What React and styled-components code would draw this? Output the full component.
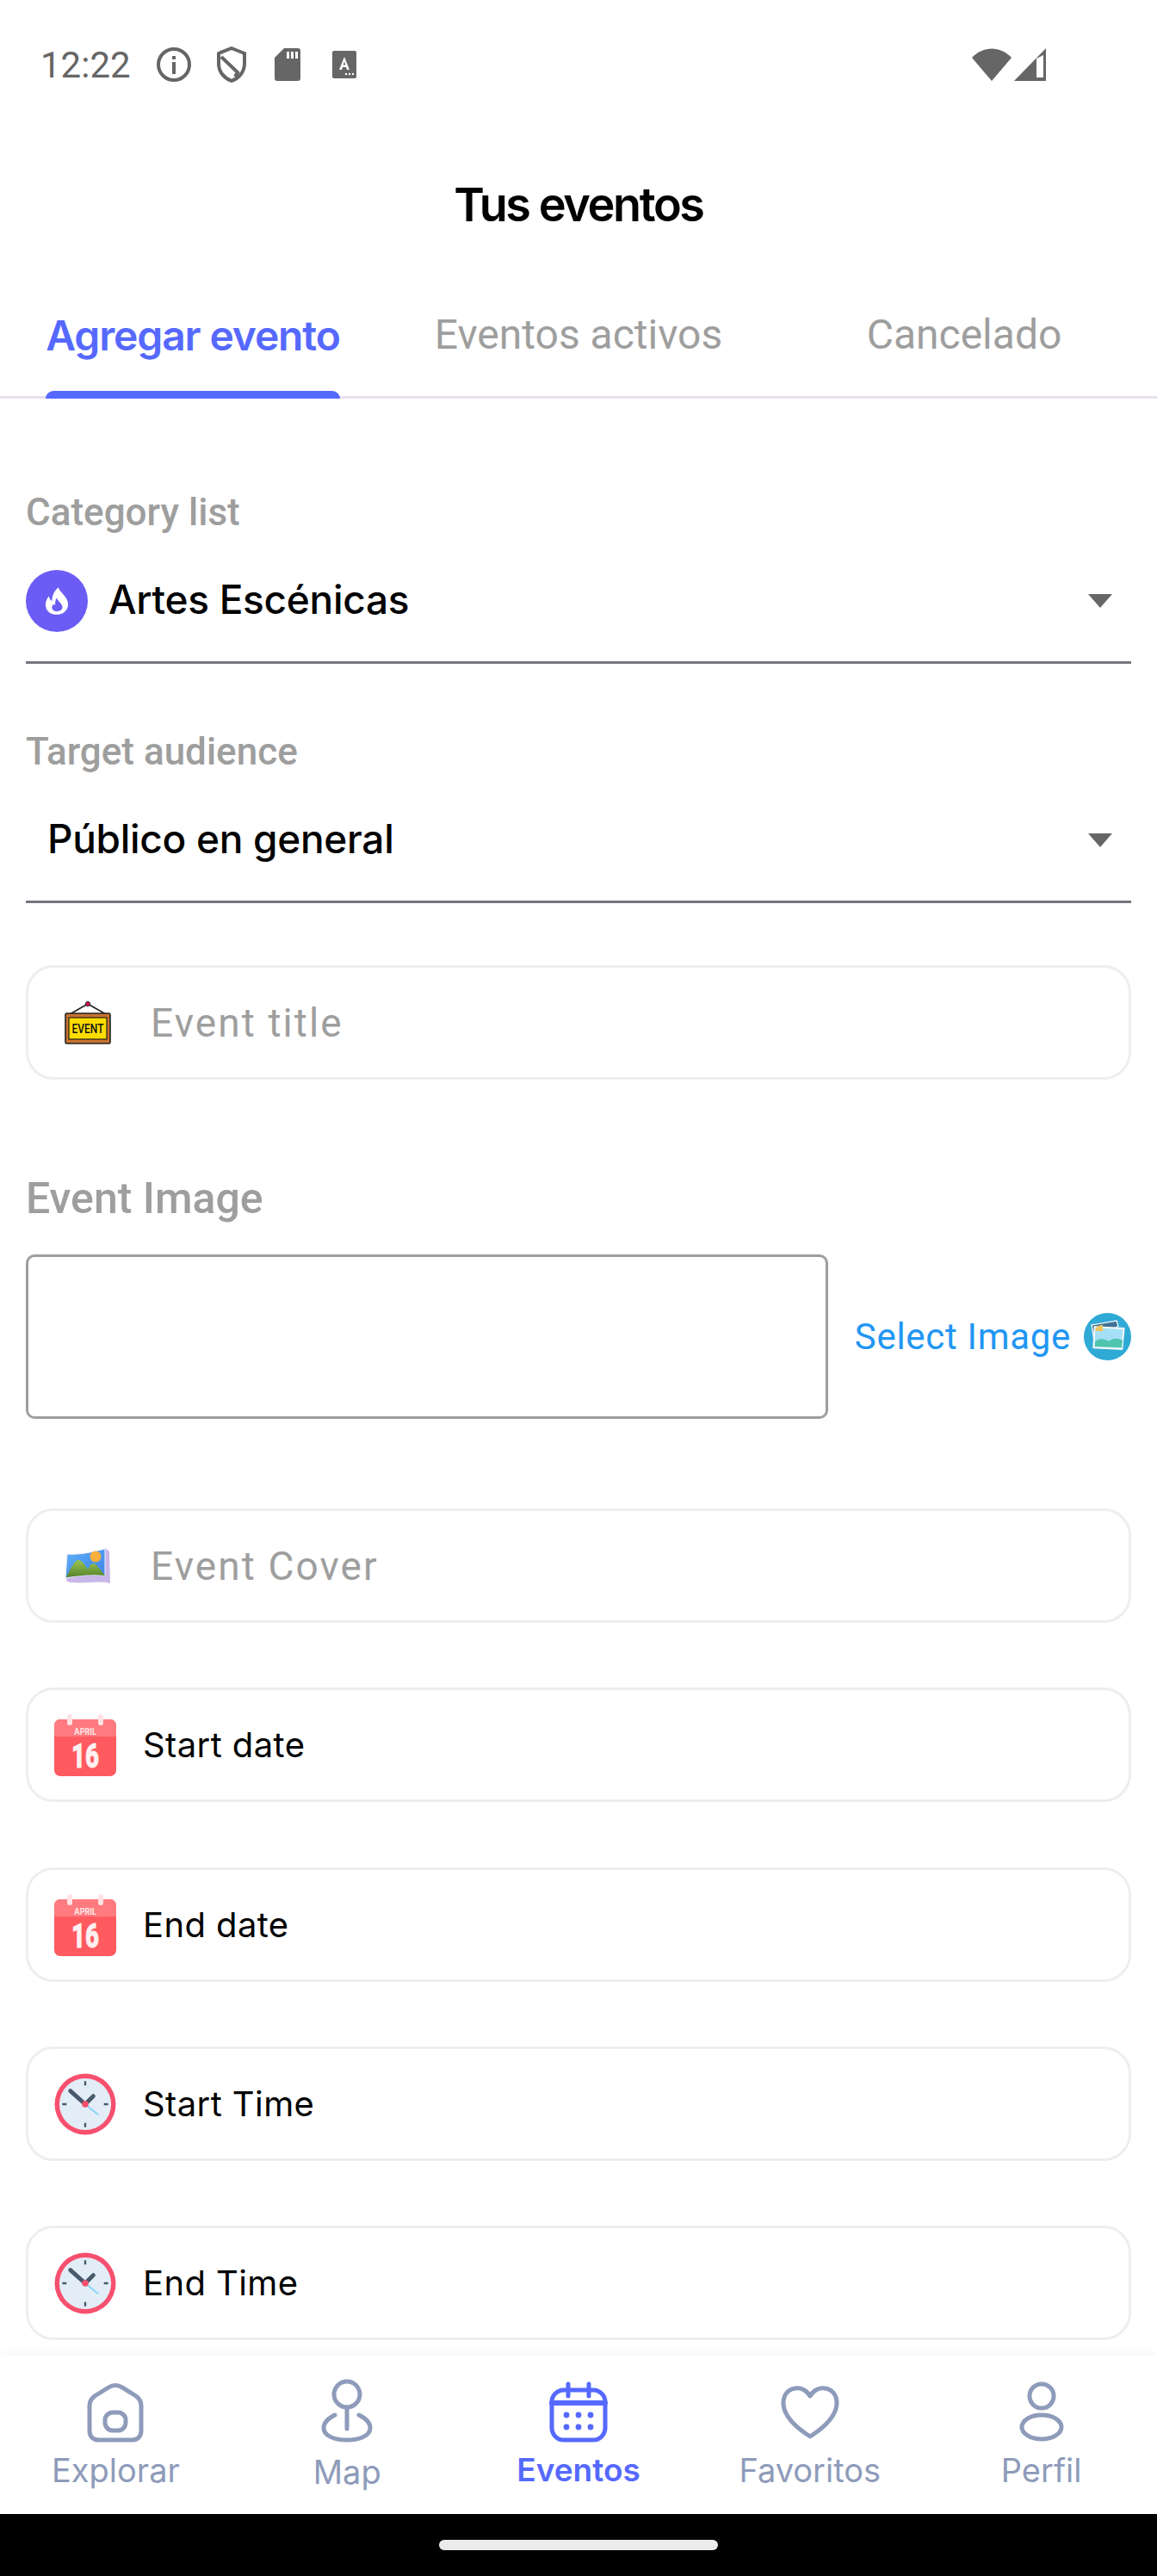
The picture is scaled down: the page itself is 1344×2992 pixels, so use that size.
import React from 'react';
import styled, { createGlobalStyle } from 'styled-components';

const GlobalStyle = createGlobalStyle`
  html, body { margin: 0; padding: 0; background: #fff; }
  * { box-sizing: border-box; }
`;

const Screen = styled.div`
  width: 1344px;
  height: 2992px;
  display: flex;
  flex-direction: column;
  overflow: hidden;
  background: #fff;
  font-family: Inter, "Liberation Sans", sans-serif;
`;

const StatusBar = styled.div`
  height: 150px;
  display: flex;
  align-items: center;
  justify-content: space-between;
  padding: 0 129px 0 47px;
  color: #666;
`;

const StatusGroup = styled.div`
  display: flex;
  align-items: center;
`;

const Clock = styled.span`
  font: 400 42px Roboto, sans-serif;
  margin-right: 30px;
`;

const Title = styled.h1`
  margin: 0;
  height: 174px;
  display: flex;
  align-items: center;
  justify-content: center;
  font: 600 54px Inter, sans-serif;
  letter-spacing: -2.4px;
  color: #000;
`;

const TabBar = styled.div`
  height: 139px;
  display: grid;
  grid-template-columns: repeat(3, 1fr);
  border-bottom: 3px solid #e7e0ec;
`;

const Tab = styled.div`
  display: flex;
  justify-content: center;
  padding-top: 36px;
  font: ${p => (p.$active ? '600 48px Inter' : '400 48px Roboto')}, sans-serif;
  letter-spacing: ${p => (p.$active ? '-1.15px' : '0')};
  color: ${p => (p.$active ? '#5669ff' : '#9e9e9e')};
`;

const TabLabel = styled.span`
  position: relative;
  &::after {
    content: '';
    display: ${p => (p.$active ? 'block' : 'none')};
    position: absolute;
    left: 0;
    right: 0;
    bottom: -3px;
    height: 9px;
    background: #5669ff;
    border-radius: 9px 9px 0 0;
  }
`;

const Form = styled.div`
  flex: 1;
  min-height: 0;
  overflow: hidden;
  padding: 0 30px;
  display: flex;
  flex-direction: column;
`;

const SelectLabel = styled.div`
  margin-top: ${p => p.$top}px;
  height: 48px;
  font: 500 44px/48px Roboto, sans-serif;
  color: #9e9e9e;
`;

const SelectRow = styled.div`
  height: 152px;
  flex: none;
  padding-top: 43px;
  padding-bottom: 34px;
  display: flex;
  align-items: center;
  gap: 24px;
  border-bottom: 3px solid #79747e;
  font: 500 46px Inter, sans-serif;
  color: #000;
`;

const SelectValue = styled.span`
  flex: 1;
  padding-left: ${p => p.$inset || 0}px;
  padding-bottom: 4px;
  letter-spacing: -0.3px;
`;

const Caret = styled.span`
  width: 0;
  height: 0;
  margin-right: 22px;
  border-left: 14px solid transparent;
  border-right: 14px solid transparent;
  border-top: 16px solid #666;
`;

const CategoryBadge = styled.span`
  width: 72px;
  height: 72px;
  border-radius: 50%;
  background: #6a5cf5;
  display: flex;
  align-items: center;
  justify-content: center;
`;

const FieldBox = styled.div`
  margin-top: ${p => p.$top}px;
  height: 133px;
  flex: none;
  display: flex;
  align-items: center;
  border: 3px solid #eeeeee;
  border-radius: 32px;
  background: #fff;
`;

const InputIcon = styled.span`
  width: 142px;
  padding-left: 42px;
  display: flex;
`;

const Placeholder = styled.span`
  font: 400 46px Roboto, sans-serif;
  letter-spacing: 2.1px;
  color: #9e9e9e;
`;

const PickerIcon = styled.span`
  width: 133px;
  padding-left: 30px;
  display: flex;
`;

const PickerText = styled.span`
  font: 400 40px Inter, sans-serif;
  letter-spacing: 0.4px;
  color: #000;
`;

const ImageLabel = styled.div`
  margin-top: 109px;
  height: 58px;
  font: 500 50px/58px Roboto, sans-serif;
  color: #9e9e9e;
`;

const ImageRow = styled.div`
  margin-top: 36px;
  display: flex;
  align-items: center;
`;

const ImagePreview = styled.div`
  width: 932px;
  height: 191px;
  border: 3px solid #9e9e9e;
  border-radius: 10px;
`;

const SelectImage = styled.div`
  flex: 1;
  display: flex;
  align-items: center;
  justify-content: flex-end;
  gap: 15px;
  font: 400 42px Roboto, sans-serif;
  letter-spacing: 0.7px;
  color: #2196f3;
`;

const BottomNav = styled.nav`
  height: 184px;
  flex: none;
  display: grid;
  grid-template-columns: repeat(5, 1fr);
  background: #fff;
  box-shadow: 0 -6px 6px rgba(0, 0, 0, 0.025);
`;

const NavItem = styled.div`
  display: flex;
  flex-direction: column;
  align-items: center;
  padding-top: ${p => p.$top || 29}px;
  font: ${p => (p.$active ? '600 37px' : '400 38px')}/40px Inter, sans-serif;
  color: ${p => (p.$active ? '#5669ff' : '#8e9bba')};
`;

const NavIcon = styled.span`
  height: 72px;
  margin-bottom: ${p => p.$gap || 12}px;
  display: flex;
`;

const HomeBar = styled.div`
  height: 72px;
  flex: none;
  background: #000;
  display: flex;
  justify-content: center;
  padding-top: 30px;
`;

const HomePill = styled.div`
  width: 324px;
  height: 12px;
  border-radius: 6px;
  background: #ebebeb;
`;

const InfoIcon = () => (
  <svg width="40" height="42" viewBox="0 0 40 42" style={{ marginRight: 30 }}>
    <circle cx="20" cy="21" r="18" fill="none" stroke="#666" strokeWidth="4" />
    <rect x="18" y="18" width="4" height="14" fill="#666" />
    <rect x="18" y="11" width="4" height="4" fill="#666" />
  </svg>
);

const ShieldIcon = () => (
  <svg width="34" height="42" viewBox="0 0 34 42" style={{ marginRight: 33 }}>
    <path d="M17 2 L32 8 V20 C32 30 25 37 17 40 C9 37 2 30 2 20 V8 Z" fill="none" stroke="#666" strokeWidth="4" />
    <path d="M5 12 L24 30 L21 35" fill="none" stroke="#666" strokeWidth="4" />
  </svg>
);

const SdIcon = () => (
  <svg width="30" height="38" viewBox="0 0 30 38" style={{ marginRight: 37 }}>
    <path d="M11 0 H27 a3 3 0 0 1 3 3 V35 a3 3 0 0 1 -3 3 H3 a3 3 0 0 1 -3 -3 V11 Z" fill="#666" />
    <rect x="14" y="4" width="3" height="8" fill="#fff" />
    <rect x="19" y="4" width="3" height="8" fill="#fff" />
    <rect x="24" y="4" width="3" height="8" fill="#fff" />
  </svg>
);

const KeyboardIcon = () => (
  <svg width="28" height="32" viewBox="0 0 28 32">
    <rect width="28" height="32" rx="2" fill="#666" />
    <path d="M14 7 L20 22 H17 L16 19 H12 L11 22 H8 Z M14 12 L12.8 16.5 H15.2 Z" fill="#fff" fillRule="evenodd" />
    <circle cx="16" cy="27" r="1.2" fill="#fff" />
    <circle cx="20" cy="27" r="1.2" fill="#fff" />
    <circle cx="24" cy="27" r="1.2" fill="#fff" />
  </svg>
);

const WifiIcon = () => (
  <svg width="46" height="38" viewBox="0 0 46 38" style={{ marginRight: 3 }}>
    <path d="M0 11 C13 -3 33 -3 46 11 L23 38 Z" fill="#666" />
  </svg>
);

const SignalIcon = () => (
  <svg width="37" height="38" viewBox="0 0 37 38">
    <path d="M37 0 V38 H0 Z" fill="#666" />
    <path d="M26 12 L34 8 V34 H26 Z" fill="#fff" />
  </svg>
);

const FlameIcon = () => (
  <svg width="28" height="32" viewBox="0 0 30 34">
    <path d="M17 0 C18 6 29 11 29 21 C29 29 23 34 15 34 C6 34 1 29 1 21 C1 17 3 14 5 11 C6 14 7 16 9 17 C9 10 12 4 17 0 Z" fill="#fff" />
    <path d="M15 13 C16 18 22 20 22 25 C22 28 18 30 15 30 C12 30 9 28 9 25 C9 23 10 22 11 21 C12 21 12 22 13 22 C13 19 13 16 15 13 Z" fill="#6a5cf5" />
  </svg>
);

const EventSign = () => (
  <svg width="54" height="50" viewBox="0 0 54 50">
    <path d="M6 15 L27 3 L48 15" fill="none" stroke="#222" strokeWidth="1.6" />
    <circle cx="27" cy="3" r="2.6" fill="#e0125a" stroke="#222" strokeWidth="1" />
    <rect x="1" y="14" width="52" height="35" rx="1.5" fill="#c9722f" stroke="#222" strokeWidth="1.6" />
    <rect x="5" y="19" width="44" height="25" fill="#ffdd00" stroke="#222" strokeWidth="1.2" />
    <text x="27" y="37" textAnchor="middle" fontFamily="Roboto, sans-serif" fontWeight="500" fontSize="15" textLength="37" lengthAdjust="spacingAndGlyphs" fill="#111">EVENT</text>
  </svg>
);

const CoverIcon = () => (
  <svg width="54" height="44" viewBox="0 0 54 44">
    <defs>
      <linearGradient id="coverSky" x1="0" y1="0" x2="1" y2="1">
        <stop offset="0" stopColor="#5fb0f5" />
        <stop offset="1" stopColor="#3d83ea" />
      </linearGradient>
      <linearGradient id="coverHill" x1="0" y1="0" x2="0" y2="1">
        <stop offset="0" stopColor="#9cc552" />
        <stop offset="1" stopColor="#55832c" />
      </linearGradient>
    </defs>
    <path d="M1 34 C18 32 30 30 46 33 L47 1 L52 5 L53 42 C38 38 18 44 3 40 Z" fill="#c9b6e8" />
    <path d="M3 8 C18 9 30 6 47 2 V33 C30 31 18 33 1 36 Z" fill="url(#coverSky)" stroke="#f4f1fb" strokeWidth="1" />
    <circle cx="36" cy="11" r="6.5" fill="#fbb03b" />
    <path d="M2 35 C6 26 12 15 16 15 C20 15 24 21 27 26 C29 22 31 19 33 19 C37 19 42 27 47 33 C30 31 18 33 2 35 Z" fill="url(#coverHill)" />
  </svg>
);

const CalendarIcon = () => (
  <svg width="72" height="72" viewBox="0 0 72 72">
    <rect y="6" width="72" height="66" rx="7" fill="#ff5a5f" />
    <path d="M0 26 V13 a7 7 0 0 1 7 -7 H65 a7 7 0 0 1 7 7 V26 Z" fill="#ff7b80" />
    <rect x="15" y="0" width="6" height="13" rx="3" fill="#ffe3e4" />
    <rect x="51" y="0" width="6" height="13" rx="3" fill="#ffe3e4" />
    <text x="36" y="24" textAnchor="middle" fontFamily="Inter, sans-serif" fontWeight="700" fontSize="11" textLength="26" lengthAdjust="spacingAndGlyphs" fill="#ffe3e4">APRIL</text>
    <text x="36" y="62" textAnchor="middle" fontFamily="Roboto, sans-serif" fontWeight="900" fontSize="38" textLength="32" lengthAdjust="spacingAndGlyphs" fill="#fff0f0" stroke="#fff0f0" strokeWidth="0.8">16</text>
  </svg>
);

const ClockIcon = () => (
  <svg width="72" height="72" viewBox="0 0 73 73">
    <circle cx="36.5" cy="36.5" r="36" fill="#f7506e" />
    <circle cx="36.5" cy="36.5" r="30.5" fill="#e3edf7" />
    <path d="M36.5 9.5 V14.5 M36.5 58.5 V63.5 M9.5 36.5 H14.5 M58.5 36.5 H63.5" stroke="#47596b" strokeWidth="2.4" />
    <path d="M36.5 36.5 L19 21 M36.5 36.5 L46 27" stroke="#47596b" strokeWidth="5" strokeLinecap="round" />
    <path d="M36.5 36.5 L52 49" stroke="#7fd4f5" strokeWidth="1.8" />
    <circle cx="36.5" cy="36.5" r="3.8" fill="#f7506e" />
  </svg>
);

const GalleryIcon = () => (
  <svg width="55" height="55" viewBox="0 0 55 55">
    <circle cx="27.5" cy="27.5" r="27.5" fill="#2fa9d6" />
    <path d="M9 14 L38 9 L40 15 L13 38 Z" fill="#3f7396" stroke="#eaf4f8" strokeWidth="1.4" />
    <path d="M12 17 L46 17 L45 41 L12 41 Z" fill="#a5e0f7" stroke="#f3f8fa" strokeWidth="2" transform="rotate(3 28 28)" />
    <path d="M13 21 A8 8 0 0 1 22 14 L22 21 Z" fill="#f3c659" />
    <path d="M13 33 C20 28 25 31 29 33 C34 29 40 29 45 32 L44 40 L13 39 Z" fill="#4fc4ae" />
  </svg>
);

const iconStroke = { fill: 'none', stroke: 'currentColor', strokeWidth: 5, strokeLinecap: 'round', strokeLinejoin: 'round' };

const HomeIcon = () => (
  <svg width="68" height="72" viewBox="0 0 68 72" {...iconStroke}>
    <path d="M4 29 C4 25 6 21 10 18 L26 8 C31 5 37 5 42 8 L58 18 C62 21 64 25 64 29 V58 C64 65 60 69 53 69 H15 C8 69 4 65 4 58 Z" />
    <rect x="22" y="37" width="24" height="21" rx="9" />
  </svg>
);

const PinIcon = () => (
  <svg width="60" height="74" viewBox="0 0 60 74" {...iconStroke}>
    <circle cx="30" cy="18" r="15" />
    <path d="M30 33 V58" />
    <path d="M16 42 C8 46 3 51 3 57 C3 66 15 71 30 71 C45 71 57 66 57 57 C57 51 52 46 44 42" />
  </svg>
);

const EventsIcon = () => (
  <svg width="68" height="72" viewBox="0 0 68 72" {...iconStroke}>
    <path d="M22 4 V18 M46 4 V18" />
    <rect x="3" y="11" width="62" height="58" rx="14" />
    <path d="M3 26 H65" strokeWidth="6" />
    <g fill="currentColor" stroke="none">
      <circle cx="20" cy="40" r="3.4" /><circle cx="34" cy="40" r="3.4" /><circle cx="48" cy="40" r="3.4" />
      <circle cx="20" cy="54" r="3.4" /><circle cx="34" cy="54" r="3.4" /><circle cx="48" cy="54" r="3.4" />
    </g>
  </svg>
);

const HeartIcon = () => (
  <svg width="68" height="72" viewBox="0 0 68 72" {...iconStroke}>
    <path d="M34 18 C30 11 23 8 17 9 C8 10 3 17 3 26 C3 42 20 56 34 65 C48 56 65 42 65 26 C65 17 60 10 51 9 C45 8 38 11 34 18 Z" />
  </svg>
);

const PersonIcon = () => (
  <svg width="54" height="72" viewBox="0 0 54 72" {...iconStroke}>
    <circle cx="27" cy="18" r="14" />
    <ellipse cx="27" cy="54" rx="23" ry="14" />
  </svg>
);

const navItems = [
  { label: 'Explorar', icon: <HomeIcon /> },
  { label: 'Map', icon: <PinIcon />, top: 27, gap: 16 },
  { label: 'Eventos', icon: <EventsIcon />, active: true },
  { label: 'Favoritos', icon: <HeartIcon /> },
  { label: 'Perfil', icon: <PersonIcon /> },
];

const pickers = [
  { label: 'Start date', icon: <CalendarIcon />, top: 75 },
  { label: 'End date', icon: <CalendarIcon />, top: 76 },
  { label: 'Start Time', icon: <ClockIcon />, top: 75 },
  { label: 'End Time', icon: <ClockIcon />, top: 75 },
];

export default function App() {
  return (
    <Screen>
      <GlobalStyle />
      <StatusBar>
        <StatusGroup>
          <Clock>12:22</Clock>
          <InfoIcon />
          <ShieldIcon />
          <SdIcon />
          <KeyboardIcon />
        </StatusGroup>
        <StatusGroup>
          <WifiIcon />
          <SignalIcon />
        </StatusGroup>
      </StatusBar>
      <Title>Tus eventos</Title>
      <TabBar>
        <Tab $active><TabLabel $active>Agregar evento</TabLabel></Tab>
        <Tab><TabLabel>Eventos activos</TabLabel></Tab>
        <Tab><TabLabel>Cancelado</TabLabel></Tab>
      </TabBar>
      <Form>
        <SelectLabel $top={108}>Category list</SelectLabel>
        <SelectRow>
          <CategoryBadge><FlameIcon /></CategoryBadge>
          <SelectValue>Artes Escénicas</SelectValue>
          <Caret />
        </SelectRow>
        <SelectLabel $top={78}>Target audience</SelectLabel>
        <SelectRow>
          <SelectValue $inset={25}>Público en general</SelectValue>
          <Caret />
        </SelectRow>
        <FieldBox $top={72}>
          <InputIcon><EventSign /></InputIcon>
          <Placeholder>Event title</Placeholder>
        </FieldBox>
        <ImageLabel>Event Image</ImageLabel>
        <ImageRow>
          <ImagePreview />
          <SelectImage>Select Image <GalleryIcon /></SelectImage>
        </ImageRow>
        <FieldBox $top={104}>
          <InputIcon><CoverIcon /></InputIcon>
          <Placeholder>Event Cover</Placeholder>
        </FieldBox>
        {pickers.map(item => (
          <FieldBox key={item.label} $top={item.top}>
            <PickerIcon>{item.icon}</PickerIcon>
            <PickerText>{item.label}</PickerText>
          </FieldBox>
        ))}
      </Form>
      <BottomNav>
        {navItems.map(item => (
          <NavItem key={item.label} $active={item.active} $top={item.top}>
            <NavIcon $gap={item.gap}>{item.icon}</NavIcon>
            {item.label}
          </NavItem>
        ))}
      </BottomNav>
      <HomeBar><HomePill /></HomeBar>
    </Screen>
  );
}
